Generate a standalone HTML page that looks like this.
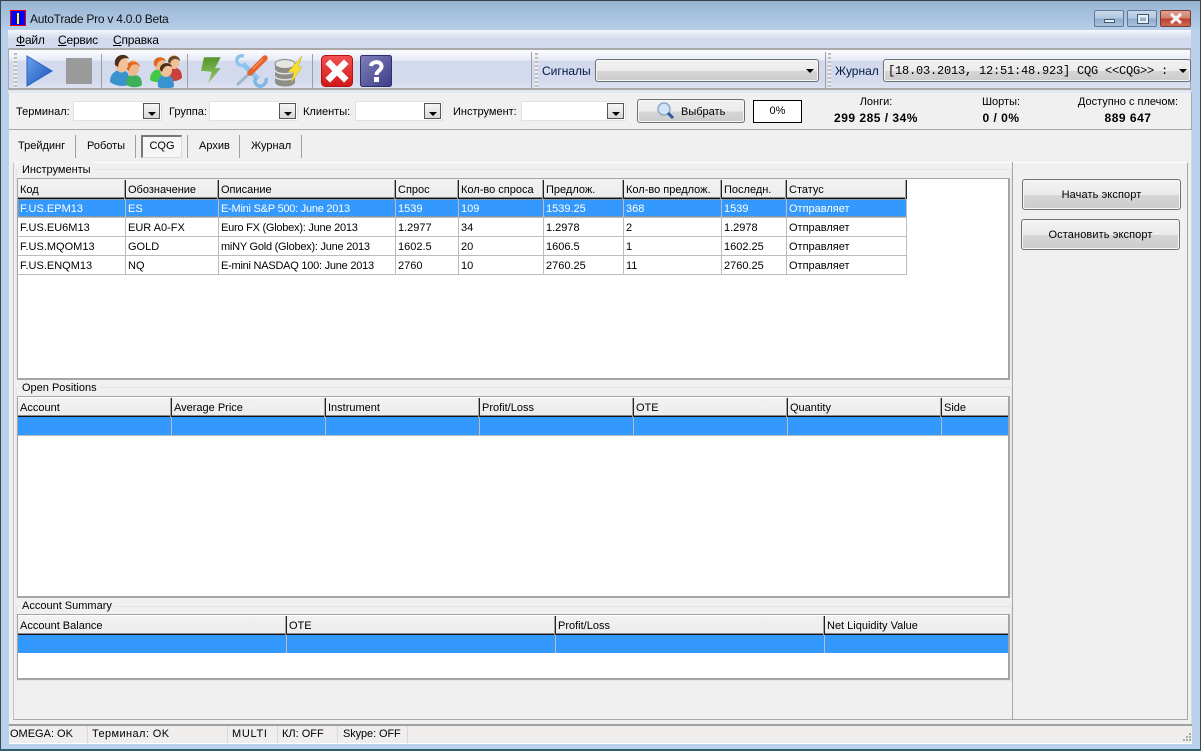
<!DOCTYPE html>
<html><head><meta charset="utf-8"><style>
html,body{margin:0;padding:0;background:#b9d1ea}
#w{position:relative;width:1201px;height:751px;overflow:hidden;background:#b9d1ea;font:11px "Liberation Sans",sans-serif;color:#000}
#w div,#w svg,#w span.a{position:absolute}
.t{white-space:nowrap;line-height:16px}
.d{letter-spacing:-.24px}
.c{position:absolute;background:#fff;border:1px solid #e2e2e2;box-sizing:border-box}
.c i{position:absolute;right:1px;top:1px;width:17px;height:16px;border:1px solid #555;box-sizing:border-box;background:linear-gradient(#f5f5f5,#d8d8d8)}
.c i:after{content:"";position:absolute;left:4px;top:8px;border:4px solid transparent;border-top:4px solid #000;border-bottom:0}
.btn{box-sizing:border-box;border:1px solid #707070;border-radius:3px;background:linear-gradient(#f2f2f2 0,#ebebeb 52%,#d6d6d6 52%,#cccccc 100%);box-shadow:inset 0 0 0 1px #f6f6f6;text-align:center}
.sep{width:1px;background:#a0a0a0}
.grip{width:3px;background:repeating-linear-gradient(#bdbdbd 0 2px,#f2f2f2 2px 4px)}
.tbl{background:#fff;border:1px solid #a5a5a5;box-sizing:border-box;border-right-width:2px;border-bottom-width:2px}
.h{height:19px;background:linear-gradient(#f2f2f2,#ececec);border-bottom:1px solid #111;box-shadow:inset 0 -1px 0 #8a8a8a;box-sizing:border-box}
.hl{width:1px;background:#222;box-shadow:-1px 0 0 #a8a8a8}
.gl{width:1px;background:#bcbcbc}
.hl2{height:1px;background:#bcbcbc}
.u{text-decoration:underline}
</style></head><body><div id="w">

<!-- title bar -->
<div style="left:0;top:0;width:1201px;height:30px;background:linear-gradient(#97b3d1,#b6cfe9)"></div>
<div style="left:0;top:0;width:1201px;height:1px;background:#3a3f45"></div>
<div style="left:0;top:0;width:1px;height:751px;background:#3a4a55"></div>
<div style="left:1200px;top:0;width:1px;height:751px;background:#3a4a55"></div>
<div style="left:0;top:749px;width:1201px;height:2px;background:#2f5f6f"></div>
<div style="left:10px;top:10px;width:16px;height:16px;box-sizing:border-box;background:#00f;border:1px solid #e00"></div>
<div style="left:17px;top:13px;width:2px;height:11px;background:#ff0"></div>
<div class="t" style="left:30px;top:11px;font-size:12px;letter-spacing:-.25px;color:#111">AutoTrade Pro v 4.0.0 Beta</div>
<!-- caption buttons -->
<div style="left:1094px;top:10px;width:30px;height:17px;box-sizing:border-box;border:1px solid #5f7a96;border-radius:2px;background:linear-gradient(#c9d9ea 0,#b2c8de 50%,#8eaac8 50%,#a9c3dd 100%)"></div>
<div style="left:1104px;top:19px;width:11px;height:4px;background:#e8eff6;border:1px solid #44586e;box-sizing:border-box"></div>
<div style="left:1127px;top:10px;width:30px;height:17px;box-sizing:border-box;border:1px solid #5f7a96;border-radius:2px;background:linear-gradient(#c9d9ea 0,#b2c8de 50%,#8eaac8 50%,#a9c3dd 100%)"></div>
<div style="left:1138px;top:15px;width:10px;height:8px;box-sizing:border-box;border:2px solid #e8eff6;outline:1px solid #44586e"></div>
<div style="left:1160px;top:10px;width:31px;height:17px;box-sizing:border-box;border:1px solid #7a3a32;border-radius:2px;background:linear-gradient(#e0a193 0,#d27f6f 50%,#b83c2b 50%,#cf6a55 100%)"></div>
<svg style="left:1169px;top:13px" width="14" height="11"><path d="M2 1 L12 10 M12 1 L2 10" stroke="#f4f4f4" stroke-width="3"/></svg>

<!-- menu -->
<div style="left:8px;top:30px;width:1183px;height:18px;background:linear-gradient(#f7f8fc 0,#e3e7f3 25%,#d5dbee 50%,#d5dbee 100%)"></div>
<div class="t" style="left:16px;top:32px;font-size:12px;letter-spacing:-.2px"><span class="u">Ф</span>айл</div>
<div class="t" style="left:58px;top:32px;font-size:12px;letter-spacing:-.2px"><span class="u">С</span>ервис</div>
<div class="t" style="left:113px;top:32px;font-size:12px;letter-spacing:-.2px"><span class="u">С</span>правка</div>

<!-- toolbar -->
<div style="left:8px;top:90px;width:1183px;height:3px;background:#e2e8f3"></div>
<div style="left:8px;top:48px;width:1183px;height:2px;background:#a9a9a9"></div>
<div style="left:8px;top:50px;width:1183px;height:39px;background:linear-gradient(#fbfcfe 0,#e8ecf6 25%,#d4daee 30%,#d4daee 80%,#dfe3f2 100%)"></div>
<div style="left:8px;top:88px;width:1183px;height:2px;background:#a9a9a9"></div>
<div style="left:8px;top:48px;width:1px;height:42px;background:#a9a9a9"></div>
<div style="left:1190px;top:48px;width:1px;height:42px;background:#a9a9a9"></div>
<div class="grip" style="left:14px;top:53px;height:35px"></div>
<svg style="left:26px;top:55px" width="28" height="32"><defs><linearGradient id="pl" x1="0" y1="0" x2="1" y2="1"><stop offset="0" stop-color="#6aa4ec"/><stop offset="1" stop-color="#1650b8"/></linearGradient></defs><path d="M1 1 L26 16 L1 31 Z" fill="url(#pl)" stroke="#2a62c0"/></svg>
<div style="left:66px;top:58px;width:26px;height:26px;background:#9b9b9b"></div>
<div class="sep" style="left:101px;top:54px;height:34px"></div>

<svg style="left:109px;top:54px" width="34" height="34">
<path d="M1 28 C1 20 6 16 12 16 C19 16 21 21 20 31 C14 33 6 32 1 28Z" fill="#3a93cf"/>
<path d="M18 31 C16 24 19 21 25 21 C31 21 33 25 33 31 C29 34 22 34 18 31Z" fill="#3fb05a"/>
<ellipse cx="24" cy="14" rx="6" ry="8" fill="#eeb98e"/><path d="M17 15 C16 6 30 5 31 13 C27 8 21 10 20 17Z" fill="#e2681e"/>
<ellipse cx="12.500" cy="10" rx="6.500" ry="8.500" fill="#f0c099"/><path d="M6 11 C4 0 18 -2 20 5 C16 3 10 4 9 13 Z" fill="#4a3018"/>
</svg>
<svg style="left:149px;top:54px" width="34" height="34">
<path d="M1 26 C1 18 6 15 11 15 C16 15 18 20 18 26 C12 29 6 29 1 26Z" fill="#43c845"/>
<path d="M18 24 C18 16 22 14 26 14 C31 14 33 18 33 24 C28 28 22 28 18 24Z" fill="#c8413e"/>
<ellipse cx="11" cy="10" rx="5.500" ry="6.500" fill="#eeb98e"/><path d="M5 11 C3 2 15 1 17 7 C13 5 9 6 7 13Z" fill="#e2681e"/>
<ellipse cx="25" cy="8" rx="5.500" ry="7" fill="#f0c099"/><path d="M19 8 C19 0 31 0 31 7 C27 4 23 4 21 10Z" fill="#6a4a28"/>
<path d="M9 33 C8 24 12 21 17 21 C23 21 25 25 25 33 C20 35 13 35 9 33Z" fill="#3a93cf"/>
<ellipse cx="17" cy="16" rx="6" ry="7" fill="#f0c099"/><path d="M11 16 C10 8 22 7 23 13 C19 11 15 11 13 18Z" fill="#4a3018"/>
</svg>
<div class="sep" style="left:187px;top:54px;height:34px"></div>

<svg style="left:200px;top:56px" width="23" height="29"><defs><linearGradient id="gb" x1="0" y1="0" x2="0" y2="1"><stop offset="0" stop-color="#55962a"/><stop offset="1" stop-color="#9ac870"/></linearGradient></defs><path d="M4 1.300 L20.700 1.300 L15 12.300 L20.700 12.300 L8.300 27.300 L11.700 15.700 L1 14.700Z" fill="url(#gb)"/></svg>
<svg style="left:234px;top:54px" width="34" height="34" fill="none">
<path d="M10 2 C5 1 2 4 3 8 C4 11 7 12 10 11" stroke="#8cc4ee" stroke-width="3.500"/>
<path d="M9 10 L24 25" stroke="#8cc4ee" stroke-width="5"/>
<path d="M32 24 C33 29 29 33 25 32 C21 31 20 27 22 24" stroke="#7db8e6" stroke-width="3.500"/>
<path d="M16 19 L3 31" stroke="#9fb6cc" stroke-width="3"/>
<path d="M16 19 L31 4" stroke="#e8602a" stroke-width="5.500" stroke-linecap="round"/>
<path d="M19 15 L29 5" stroke="#f6a070" stroke-width="1"/>
</svg>
<svg style="left:274px;top:55px" width="33" height="33">
<path d="M1 9 L1 27 C1 33 21 33 21 27 L21 9Z" fill="#8e8e88"/>
<ellipse cx="11" cy="9" rx="10" ry="4.500" fill="#e6e6e0" stroke="#8a8a82"/>
<path d="M1 15 C1 20 21 20 21 15 M1 21 C1 26 21 26 21 21" stroke="#e0e0e0" stroke-width="1.500" fill="none"/>
<path d="M28 1 L24 12 L28 12 L17 28 L20 17 L14 17Z" fill="#f5e030" stroke="#c0a820" stroke-width=".5"/>
</svg>
<div class="sep" style="left:312px;top:54px;height:34px"></div>

<svg style="left:321px;top:55px" width="33" height="33"><defs><linearGradient id="rd" x1="0" y1="0" x2="0" y2="1"><stop offset="0" stop-color="#f45050"/><stop offset="1" stop-color="#d01818"/></linearGradient></defs><rect x=".5" y=".5" width="31" height="31" rx="4" fill="url(#rd)" stroke="#b81010"/><path d="M9 9 L23 23 M23 9 L9 23" stroke="#fff" stroke-width="6.500" stroke-linecap="square"/></svg>
<svg style="left:360px;top:55px" width="33" height="33"><defs><linearGradient id="pu" x1="0" y1="0" x2="1" y2="1"><stop offset="0" stop-color="#8080bc"/><stop offset="1" stop-color="#3d3d88"/></linearGradient></defs><rect x=".5" y=".5" width="31" height="31" rx="2" fill="url(#pu)" stroke="#2e2e70"/><path d="M11 11 C11.500 6 21.500 5.500 21.500 11.500 C21.500 15.500 16.500 15.500 16.500 20" fill="none" stroke="#fff" stroke-width="4"/><rect x="14" y="22" width="5" height="5" fill="#fff"/></svg>

<div class="sep" style="left:531px;top:52px;height:36px"></div>
<div class="grip" style="left:535px;top:53px;height:35px"></div>
<div class="t" style="left:542px;top:63px;font-size:12px;color:#001a40">Сигналы</div>
<div class="btn" style="left:595px;top:59px;width:224px;height:23px"></div>
<svg style="left:806px;top:69px" width="9" height="5"><path d="M0 0 H8 L4 4Z" fill="#000"/></svg>
<div class="sep" style="left:825px;top:52px;height:36px"></div>
<div class="grip" style="left:828px;top:53px;height:35px"></div>
<div class="t" style="left:835px;top:63px;font-size:12px;color:#001a40">Журнал</div>
<div class="btn" style="left:883px;top:59px;width:308px;height:23px"></div>
<div class="t" style="left:888px;top:64px;font:12px/14px 'Liberation Mono',monospace;letter-spacing:-.2px;white-space:pre">[18.03.2013, 12:51:48.923] CQG &lt;&lt;CQG&gt;&gt; :</div>
<svg style="left:1179px;top:69px" width="9" height="5"><path d="M0 0 H8 L4 4Z" fill="#000"/></svg>

<!-- filter bar -->
<div style="left:9px;top:93px;width:1183px;height:36px;background:#f0f0f0"></div>
<div style="left:9px;top:129px;width:1183px;height:1px;background:#a8a8a8"></div>
<div style="left:1191px;top:93px;width:1px;height:36px;background:#a8a8a8"></div>
<div class="t" style="left:16px;top:104px">Терминал:</div>
<div class="c" style="left:73px;top:101px;width:89px;height:20px"><i></i></div>
<div class="t" style="left:169px;top:104px">Группа:</div>
<div class="c" style="left:209px;top:101px;width:89px;height:20px"><i></i></div>
<div class="t" style="left:303px;top:104px">Клиенты:</div>
<div class="c" style="left:355px;top:101px;width:88px;height:20px"><i></i></div>
<div class="t" style="left:453px;top:104px">Инструмент:</div>
<div class="c" style="left:521px;top:101px;width:105px;height:20px"><i></i></div>
<div class="btn" style="left:637px;top:99px;width:108px;height:24px"></div>
<svg style="left:656px;top:101px" width="20" height="20"><circle cx="8" cy="8" r="6" fill="#cfe4f8" stroke="#8fa8c0" stroke-width="1.500"/><path d="M12 12 L17 17" stroke="#2a5aa0" stroke-width="3"/></svg>
<div class="t" style="left:681px;top:104px">Выбрать</div>
<div style="left:753px;top:100px;width:49px;height:23px;box-sizing:border-box;background:#fff;border:1px solid #000;text-align:center;line-height:20px">0%</div>
<div class="t" style="left:800px;top:94px;width:152px;text-align:center">Лонги:</div>
<div class="t" style="left:800px;top:110px;width:152px;text-align:center;font-weight:bold;font-size:12px;letter-spacing:.5px">299 285 / 34%</div>
<div class="t" style="left:951px;top:94px;width:100px;text-align:center">Шорты:</div>
<div class="t" style="left:951px;top:110px;width:100px;text-align:center;font-weight:bold;font-size:12px;letter-spacing:.5px">0 / 0%</div>
<div class="t" style="left:1058px;top:94px;width:140px;text-align:center">Доступно с плечом:</div>
<div class="t" style="left:1058px;top:110px;width:140px;text-align:center;font-weight:bold;font-size:12px;letter-spacing:.5px">889 647</div>

<!-- content bg -->
<div style="left:9px;top:130px;width:1183px;height:594px;background:#f0f0f0"></div>
<div style="left:1191px;top:130px;width:1px;height:594px;background:#d8d8d8"></div>
<div class="t" style="left:18px;top:138px">Трейдинг</div>
<div class="sep" style="left:75px;top:135px;height:23px"></div>
<div class="t" style="left:87px;top:138px">Роботы</div>
<div class="sep" style="left:135px;top:135px;height:23px"></div>
<div style="left:141px;top:135px;width:41px;height:23px;box-sizing:border-box;border:1px solid #dcdcdc;border-top:2px solid #777;border-left:2px solid #777;background:#f6f6f6;text-align:center;line-height:18px">CQG</div>
<div class="sep" style="left:187px;top:135px;height:23px"></div>
<div class="t" style="left:199px;top:138px">Архив</div>
<div class="sep" style="left:239px;top:135px;height:23px"></div>
<div class="t" style="left:251px;top:138px">Журнал</div>
<div class="sep" style="left:301px;top:135px;height:23px"></div>

<!-- panel frames -->
<div style="left:13px;top:162px;width:1175px;height:558px;box-sizing:border-box;border:1px solid #a8a8a8;border-top-color:#fff;border-left-color:#c4c4c4"></div>
<div class="sep" style="left:1012px;top:162px;height:558px;background:#a8a8a8"></div>
<div style="left:9px;top:724px;width:1183px;height:2px;background:#a0a0a0"></div>

<!-- group 1 -->
<div style="left:16px;top:169px;width:996px;height:211px;box-sizing:border-box;border:1px solid #dfe6ee;border-radius:2px"></div>
<div class="t" style="left:20px;top:162px;padding:0 2px;background:#f0f0f0">Инструменты</div>
<div class="tbl" style="left:17px;top:178px;width:993px;height:202px"></div>
<div class="h" style="left:18px;top:179px;width:889px;height:20px"></div>
<div style="left:18px;top:199px;width:889px;height:18px;background:#3399ff;box-sizing:border-box;border:1px dotted #c89a60"></div>
<div class="hl" style="left:125px;top:180px;height:19px"></div><div class="hl" style="left:218px;top:180px;height:19px"></div><div class="hl" style="left:395px;top:180px;height:19px"></div><div class="hl" style="left:458px;top:180px;height:19px"></div><div class="hl" style="left:543px;top:180px;height:19px"></div><div class="hl" style="left:623px;top:180px;height:19px"></div><div class="hl" style="left:721px;top:180px;height:19px"></div><div class="hl" style="left:786px;top:180px;height:19px"></div><div class="hl" style="left:906px;top:180px;height:19px"></div>
<div class="gl" style="left:125px;top:199px;height:76px"></div><div class="gl" style="left:218px;top:199px;height:76px"></div><div class="gl" style="left:395px;top:199px;height:76px"></div><div class="gl" style="left:458px;top:199px;height:76px"></div><div class="gl" style="left:543px;top:199px;height:76px"></div><div class="gl" style="left:623px;top:199px;height:76px"></div><div class="gl" style="left:721px;top:199px;height:76px"></div><div class="gl" style="left:786px;top:199px;height:76px"></div><div class="gl" style="left:906px;top:199px;height:76px"></div>
<div class="hl2" style="left:18px;top:217px;width:889px"></div><div class="hl2" style="left:18px;top:236px;width:889px"></div><div class="hl2" style="left:18px;top:255px;width:889px"></div><div class="hl2" style="left:18px;top:274px;width:889px"></div>

<div class="t" style="left:20px;top:182px">Код</div><div class="t" style="left:128px;top:182px">Обозначение</div><div class="t" style="left:221px;top:182px">Описание</div><div class="t" style="left:398px;top:182px">Спрос</div><div class="t" style="left:461px;top:182px">Кол-во спроса</div><div class="t" style="left:546px;top:182px">Предлож.</div><div class="t" style="left:626px;top:182px">Кол-во предлож.</div><div class="t" style="left:724px;top:182px">Последн.</div><div class="t" style="left:789px;top:182px">Статус</div>

<div class="t" style="left:20px;top:201px;color:#fff">F.US.EPM13</div><div class="t" style="left:128px;top:201px;color:#fff">ES</div><div class="t d" style="left:221px;top:201px;color:#fff">E-Mini S&amp;P 500: June 2013</div><div class="t" style="left:398px;top:201px;color:#fff">1539</div><div class="t" style="left:461px;top:201px;color:#fff">109</div><div class="t" style="left:546px;top:201px;color:#fff">1539.25</div><div class="t" style="left:626px;top:201px;color:#fff">368</div><div class="t" style="left:724px;top:201px;color:#fff">1539</div><div class="t" style="left:789px;top:201px;color:#fff">Отправляет</div>

<div class="t" style="left:20px;top:220px">F.US.EU6M13</div><div class="t" style="left:128px;top:220px">EUR A0-FX</div><div class="t d" style="left:221px;top:220px">Euro FX (Globex): June 2013</div><div class="t" style="left:398px;top:220px">1.2977</div><div class="t" style="left:461px;top:220px">34</div><div class="t" style="left:546px;top:220px">1.2978</div><div class="t" style="left:626px;top:220px">2</div><div class="t" style="left:724px;top:220px">1.2978</div><div class="t" style="left:789px;top:220px">Отправляет</div>

<div class="t" style="left:20px;top:239px">F.US.MQOM13</div><div class="t" style="left:128px;top:239px">GOLD</div><div class="t d" style="left:221px;top:239px">miNY Gold (Globex): June 2013</div><div class="t" style="left:398px;top:239px">1602.5</div><div class="t" style="left:461px;top:239px">20</div><div class="t" style="left:546px;top:239px">1606.5</div><div class="t" style="left:626px;top:239px">1</div><div class="t" style="left:724px;top:239px">1602.25</div><div class="t" style="left:789px;top:239px">Отправляет</div>

<div class="t" style="left:20px;top:258px">F.US.ENQM13</div><div class="t" style="left:128px;top:258px">NQ</div><div class="t d" style="left:221px;top:258px">E-mini NASDAQ 100: June 2013</div><div class="t" style="left:398px;top:258px">2760</div><div class="t" style="left:461px;top:258px">10</div><div class="t" style="left:546px;top:258px">2760.25</div><div class="t" style="left:626px;top:258px">11</div><div class="t" style="left:724px;top:258px">2760.25</div><div class="t" style="left:789px;top:258px">Отправляет</div>

<!-- group 2 -->
<div style="left:16px;top:387px;width:996px;height:211px;box-sizing:border-box;border:1px solid #dfe6ee;border-radius:2px"></div>
<div class="t" style="left:20px;top:380px;padding:0 2px;background:#f0f0f0">Open Positions</div>
<div class="tbl" style="left:17px;top:396px;width:993px;height:202px"></div>
<div class="h" style="left:18px;top:398px;width:990px"></div>
<div style="left:18px;top:417px;width:990px;height:18px;background:#3399ff"></div>
<div class="hl2" style="left:18px;top:435px;width:990px"></div>
<div class="hl" style="left:171px;top:398px;height:19px"></div><div class="hl" style="left:325px;top:398px;height:19px"></div><div class="hl" style="left:479px;top:398px;height:19px"></div><div class="hl" style="left:633px;top:398px;height:19px"></div><div class="hl" style="left:787px;top:398px;height:19px"></div><div class="hl" style="left:941px;top:398px;height:19px"></div>
<div class="gl" style="left:171px;top:417px;height:18px"></div><div class="gl" style="left:325px;top:417px;height:18px"></div><div class="gl" style="left:479px;top:417px;height:18px"></div><div class="gl" style="left:633px;top:417px;height:18px"></div><div class="gl" style="left:787px;top:417px;height:18px"></div><div class="gl" style="left:941px;top:417px;height:18px"></div>
<div class="t" style="left:20px;top:400px">Account</div><div class="t" style="left:174px;top:400px">Average Price</div><div class="t" style="left:328px;top:400px">Instrument</div><div class="t" style="left:482px;top:400px">Profit/Loss</div><div class="t" style="left:636px;top:400px">OTE</div><div class="t" style="left:790px;top:400px">Quantity</div><div class="t" style="left:944px;top:400px">Side</div>

<!-- group 3 -->
<div style="left:16px;top:606px;width:996px;height:75px;box-sizing:border-box;border:1px solid #dfe6ee;border-radius:2px"></div>
<div class="t" style="left:20px;top:598px;padding:0 2px;background:#f0f0f0">Account Summary</div>
<div class="tbl" style="left:17px;top:614px;width:993px;height:66px"></div>
<div class="h" style="left:18px;top:616px;width:990px"></div>
<div style="left:18px;top:635px;width:990px;height:18px;background:#3399ff"></div>
<div class="hl" style="left:286px;top:616px;height:19px"></div><div class="hl" style="left:555px;top:616px;height:19px"></div><div class="hl" style="left:824px;top:616px;height:19px"></div>
<div class="gl" style="left:286px;top:635px;height:18px"></div><div class="gl" style="left:555px;top:635px;height:18px"></div><div class="gl" style="left:824px;top:635px;height:18px"></div>
<div class="t" style="left:20px;top:618px">Account Balance</div><div class="t" style="left:289px;top:618px">OTE</div><div class="t" style="left:558px;top:618px">Profit/Loss</div><div class="t" style="left:827px;top:618px">Net Liquidity Value</div>

<!-- right buttons -->
<div class="btn" style="left:1022px;top:179px;width:159px;height:31px;line-height:31px;letter-spacing:.1px">Начать экспорт</div>
<div class="btn" style="left:1021px;top:219px;width:159px;height:31px;line-height:31px;letter-spacing:.1px">Остановить экспорт</div>

<!-- status bar -->
<div style="left:9px;top:726px;width:1183px;height:18px;background:#f0eded;box-sizing:border-box;border-bottom:1px solid #fff"></div>
<div class="t" style="left:10px;top:726px">OMEGA: OK</div>
<div class="gl" style="left:87px;top:726px;height:17px;background:#d8d8d8"></div>
<div class="t" style="left:92px;top:726px;letter-spacing:.4px">Терминал: OK</div>
<div class="gl" style="left:227px;top:726px;height:17px;background:#d8d8d8"></div>
<div class="t" style="left:232px;top:726px;letter-spacing:.7px">MULTI</div>
<div class="gl" style="left:277px;top:726px;height:17px;background:#d8d8d8"></div>
<div class="t" style="left:282px;top:726px">КЛ: OFF</div>
<div class="gl" style="left:337px;top:726px;height:17px;background:#d8d8d8"></div>
<div class="t" style="left:343px;top:726px;letter-spacing:-.1px">Skype: OFF</div>
<div class="gl" style="left:407px;top:726px;height:17px;background:#d8d8d8"></div>
<svg style="left:1182px;top:732px" width="10" height="10"><path d="M7 1h2v2h-2zM4 4h2v2h-2zM7 4h2v2h-2zM1 7h2v2h-2zM4 7h2v2h-2zM7 7h2v2h-2z" fill="#a8a8a8"/></svg>

</div></body></html>
